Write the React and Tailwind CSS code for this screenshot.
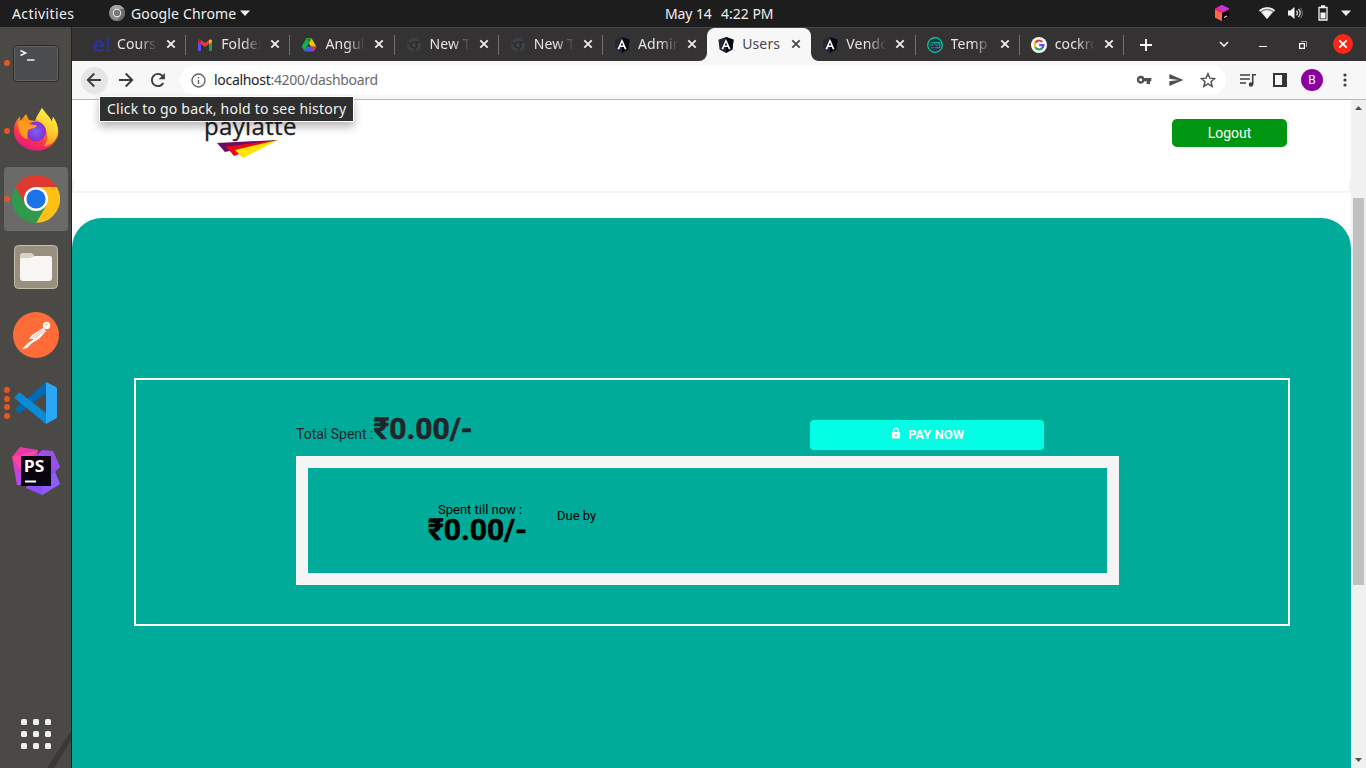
import React from "react";

const UI = "font-['Noto_Sans','Open_Sans',sans-serif]";

function ChromeMark({ size, className, center = "#1a73e8", ring = "#fff", red = "#dc3a2e", green = "#2f9a4c", yellow = "#fcc016" }) {
  return (
    <svg width={size} height={size} viewBox="0 0 48 48" className={className}>
      <path d="M24 12H44.8A24 24 0 0 0 3.2 12L13.6 30Z" fill={red} />
      <path d="M34.4 30L24 48A24 24 0 0 0 44.8 12H24Z" fill={yellow} />
      <path d="M13.6 30L3.2 12A24 24 0 0 0 24 48L34.4 30Z" fill={green} />
      <circle cx="24" cy="24" r="12" fill={ring} />
      <circle cx="24" cy="24" r="9.6" fill={center} />
    </svg>
  );
}

function Gmail() {
  return (
    <svg width="16" height="16" viewBox="0 0 16 16">
      <path d="M1 4h3v10H2a1 1 0 0 1-1-1z" fill="#5a50f0" />
      <path d="M12 4h3v9a1 1 0 0 1-1 1h-2z" fill="#1fa34a" />
      <path d="M1 4.2C1 2.500 3 2 4 3l4 3 4-3v4l-4 3-4-3L1 5z" fill="#f0383a" />
      <path d="M1 4.2C1 2.500 3 2 4 3v4L1 5z" fill="#c5221f" />
      <path d="M12 3c1-1 3-.5 3 1.200V5l-3 2z" fill="#fbbc04" />
    </svg>
  );
}

function Drive() {
  return (
    <svg width="16" height="16" viewBox="0 0 16 16">
      <path d="M5.300 1.500H10.700L8 6.200 3.400 14 .6 9.500z" fill="#12b04e" />
      <path d="M5.300 1.500H10.700L15.400 9.700H10L8 6.200z" fill="#ffc107" />
      <path d="M5.300 1.500H10.700L8 6.200z" fill="#0c8a3c" />
      <path d="M6 9.700H15.400L12.700 14.400H3.200z" fill="#5454ee" />
      <path d="M10.200 9.700H15.400L12.700 14.400z" fill="#e9352b" />
    </svg>
  );
}

function Angular() {
  return (
    <svg width="16" height="16" viewBox="0 0 16 16">
      <path d="M8 0l7.600 2.700-1.200 9.900L8 16l-6.400-3.400L.4 2.700z" fill="#232635" />
      <path d="M8 0l7.600 2.700-1.200 9.900L8 16z" fill="#05060f" />
      <path d="M8 2L3.400 12.300h1.900l.9-2.300h3.600l.9 2.300h1.900zM8 5.500l1.300 3H6.700z" fill="#fff" fillRule="evenodd" />
    </svg>
  );
}

function TempMail() {
  return (
    <svg width="16" height="16" viewBox="0 0 16 16" fill="none">
      <circle cx="8" cy="8" r="7.300" fill="#29344c" stroke="#00d69c" strokeWidth="1.200" />
      <path d="M6.500 5.500h6.300v5.200H8M7 6l3 2.600L12.500 6M4 5.500H6M3 8h3.400M4.700 10.700h2" stroke="#00c898" strokeWidth=".9" />
    </svg>
  );
}

function Google() {
  return (
    <svg width="16" height="16" viewBox="0 0 16 16" fill="none">
      <circle cx="8" cy="8" r="8" fill="#fff" />
      <g strokeWidth="2.200">
        <path d="M4.200 5.700A4.500 4.500 0 0 1 11.300 4.900" stroke="#ea3a30" />
        <path d="M4.200 5.700A4.500 4.500 0 0 0 4.200 10.300" stroke="#fbbc05" />
        <path d="M4.200 10.300A4.500 4.500 0 0 0 11 11.400" stroke="#20a84a" />
        <path d="M11 11.400A4.500 4.500 0 0 0 12.500 8.100H8.200" stroke="#5556f2" />
      </g>
    </svg>
  );
}

function Coursera() {
  return <span className="block text-[21px] leading-[14px] font-bold text-[#2b348b] font-['Open_Sans',sans-serif]">e!</span>;
}

const DimChrome = () => (
  <svg width="14" height="14" viewBox="0 0 48 48" className="mt-px ml-px">
    <circle cx="24" cy="24" r="24" fill="#3d4145" />
    <circle cx="24" cy="24" r="10" fill="#3d4145" stroke="#2c2b2d" strokeWidth="4" />
    <path d="M24 13H45M14 30L4 12M34 30L24 47" stroke="#2c2b2d" strokeWidth="4" />
  </svg>
);

const tabs = [
  { t: "Cours", I: Coursera, fade: true, sep: true },
  { t: "Folder", I: Gmail, fade: true, sep: true },
  { t: "Angul", I: Drive, fade: true, sep: true },
  { t: "New T", I: DimChrome, fade: true, sep: true },
  { t: "New T", I: DimChrome, fade: true, sep: true },
  { t: "Admin", I: Angular, fade: true },
  { t: "Users", I: Angular, active: true },
  { t: "Vendo", I: Angular, fade: true, sep: true },
  { t: "Temp", I: TempMail, fade: true, sep: true },
  { t: "cockro", I: Google, fade: true, sep: true },
];

function Cross({ color }) {
  return (
    <svg width="10" height="10" viewBox="0 0 10 10" className="shrink-0">
      <path d="M1.300 1.300l7.400 7.400M8.700 1.300L1.300 8.700" stroke={color} strokeWidth="1.800" />
    </svg>
  );
}

function Tab({ tab }) {
  const { t, I, active, fade, sep } = tab;
  return (
    <div className={"relative flex h-full w-[104.200px] shrink-0 items-center pl-[11px] " + (active ? "rounded-t-[8px] bg-[#f7f7f7]" : "")}>
      {active && (
        <>
          <svg width="8" height="8" className="absolute bottom-0 -left-[8px]"><path d="M8 0v8H0A8 8 0 0 0 8 0z" fill="#f7f7f7" /></svg>
          <svg width="8" height="8" className="absolute -right-[8px] bottom-0"><path d="M0 0v8h8A8 8 0 0 1 0 0z" fill="#f7f7f7" /></svg>
        </>
      )}
      <div className="h-4 w-4 shrink-0"><I /></div>
      <div className={"ml-2 w-[40px] overflow-hidden pb-[2px] text-[14px] leading-5 tracking-[0.15px] whitespace-nowrap " + (active ? "text-[#45484c] " : "text-[#e6e6e6] ") + (fade ? "[mask-image:linear-gradient(to_right,black_55%,transparent)]" : "")}>{t}</div>
      <div className="mb-px ml-[9px] flex"><Cross color={active ? "#45484c" : "#efefef"} /></div>
      {sep && <div className="absolute top-[7px] right-0 h-5 w-px bg-[#717073]" />}
    </div>
  );
}

function TopBar() {
  return (
    <div className="grid h-[27px] shrink-0 grid-cols-3 items-center bg-[#1d1d1d] pb-px text-[14px] text-[#f0f0f0]">
      <div className="flex items-center">
        <span className="ml-3 w-[97px] tracking-[0.4px]">Activities</span>
        <svg width="16" height="16" viewBox="0 0 16 16">
          <circle cx="8" cy="8" r="8" fill="#8b8b8b" />
          <path d="M8 4h7A8 8 0 0 1 8 16l4-6z" fill="#696969" />
          <path d="M1 4a8 8 0 0 1 14 0H8z" fill="#a5a5a5" />
          <circle cx="8" cy="8" r="4.200" fill="#f2f2f2" />
          <circle cx="8" cy="8" r="3.200" fill="#777" />
        </svg>
        <span className="ml-1.5 w-[104px] whitespace-nowrap tracking-[0.15px]">Google Chrome</span>
        <svg width="10" height="6" className="ml-[5px]"><path d="M0 .5h10L5 6z" fill="#eee" /></svg>
      </div>
      <div className="flex justify-center gap-[10px] pl-[73px] whitespace-nowrap">
        <span className="w-[46px] tracking-[-0.1px]">May 14</span>
        <span className="w-[53px]">4:22 PM</span>
      </div>
      <div className="flex items-center justify-end">
        <svg width="16" height="16" viewBox="0 0 16 16" className="mr-[29px]">
          <path d="M8 0l7 3.500v8L8 16l-7-3.500v-9z" fill="#ef2672" />
          <path d="M8 0l7 3.500L8 7.500 4 2z" fill="#c733e0" />
          <path d="M1 5l7 3v8l-7-3.500z" fill="#fc6b48" />
          <path d="M8 8l7-3.500v7L8 16z" fill="#080808" />
          <path d="M10 12.500l3-1.500" stroke="#fff" />
        </svg>
        <svg width="16" height="14" viewBox="0 0 16 14" className="mr-[12px]">
          <path d="M0 4.300A12 12 0 0 1 16 4.300L8 13z" fill="#888" />
          <path d="M0 4.300A12 12 0 0 1 16 4.300L15 5.400A10.600 10.600 0 0 0 1 5.400z" fill="#f3f3f3" />
          <path d="M2.500 6.200A8.800 8.800 0 0 1 13.500 6.200L8 13z" fill="#f3f3f3" />
        </svg>
        <svg width="16" height="14" viewBox="0 0 16 14" className="mr-[15px]">
          <path d="M1 4.500h2.500L7.500 1v12l-4-3.500H1z" fill="#f3f3f3" />
          <path d="M9.500 4.700q2 2.300 0 4.600M11.500 3q3.400 4 0 8" stroke="#ddd" fill="none" strokeWidth="1.200" />
          <path d="M13.400 1.700q4 5.300 0 10.600" stroke="#777" fill="none" />
        </svg>
        <svg width="10" height="16" viewBox="0 0 10 16" className="mr-[13px]">
          <path d="M1 2.500h8v12.500H1zM3 1h4" stroke="#f3f3f3" fill="none" strokeWidth="1.300" />
          <path d="M2.500 7.500h5v6h-5z" fill="#f3f3f3" />
        </svg>
        <svg width="10" height="6" className="mr-[15px]"><path d="M0 .5h10L5 6z" fill="#eee" /></svg>
      </div>
    </div>
  );
}

function Dots({ n }) {
  return (
    <div className="flex w-[14px] shrink-0 flex-col items-center gap-[2.800px]">
      {Array.from({ length: n }, (_, i) => <span key={i} className="h-[6px] w-[6px] rounded-full bg-[#e95420]" />)}
    </div>
  );
}

function DockItem({ dots = 0, selected, children }) {
  return (
    <div className="flex h-[68px] items-center">
      <div className="flex w-[72px] items-center">
        <div className={"ml-1 flex h-16 w-16 items-center rounded-[4px] " + (selected ? "bg-[#6a6a69]" : "")}>
          <div className="-ml-1 flex w-[8px]"><Dots n={dots} /></div>
          <div className="flex flex-1 items-center justify-center pr-1">{children}</div>
        </div>
      </div>
    </div>
  );
}

function Dock() {
  return (
    <div className="relative flex w-[72px] shrink-0 flex-col border-r border-[#222] bg-[#4a4945] pt-[2px]">
      <DockItem dots={1}>
        <svg width="48" height="48" viewBox="0 0 48 48">
          <rect x="1.500" y="6.500" width="45" height="36" rx="4" fill="#4b4c4e" stroke="#2a2a2a" />
          <rect x="2.500" y="7.500" width="43" height="34" rx="3" fill="none" stroke="#646464" />
          <path d="M8.500 11.500l5 2.500-5 2.500M15 21h7.500" stroke="#eee" strokeWidth="1.700" fill="none" />
        </svg>
      </DockItem>
      <DockItem dots={1}>
        <svg width="48" height="48" viewBox="0 0 48 48">
          <defs>
            <linearGradient id="fx1" x1=".8" y1="0" x2=".3" y2="1"><stop offset="0" stopColor="#fff44f" /><stop offset=".4" stopColor="#ff980e" /><stop offset=".7" stopColor="#ff3647" /><stop offset="1" stopColor="#e31587" /></linearGradient>
            <linearGradient id="fx3" x1=".5" y1="0" x2=".2" y2="1"><stop offset="0" stopColor="#fff44f" /><stop offset=".6" stopColor="#ffc52b" /><stop offset="1" stopColor="#ff8020" /></linearGradient>
            <radialGradient id="fx2"><stop offset="0" stopColor="#7364f4" /><stop offset="1" stopColor="#8a2dce" /></radialGradient>
          </defs>
          <path d="M2 26C1.500 18 4 13 8 9.500L8.500 14 14 7 17 13 23 14 25 9 30 1 37 10 40 15 41 10C46 16 47 24 46 29A22.500 20 0 0 1 2 26z" fill="url(#fx1)" />
          <path d="M24 12L30 1C32 7 38 9 40 15L41 10C46 18 47 25 44 31 41 37 36 39 32 39 38 32 36 18 24 12z" fill="url(#fx3)" />
          <circle cx="24" cy="24.500" r="10" fill="url(#fx2)" />
          <path d="M6 15C10 12 14 13 17 17L25 18.500C24 22 17 21 16 24 15 27 16 29 15 32 9 31 6 24 6 15z" fill="#ff9a1a" />
        </svg>
      </DockItem>
      <DockItem dots={1} selected><ChromeMark size={48} /></DockItem>
      <DockItem>
        <svg width="48" height="48" viewBox="0 0 48 48">
          <rect x="2.500" y="2.500" width="43" height="43" rx="4" fill="#988f7e" stroke="#c4bcab" />
          <path d="M8 13a3 3 0 0 1 3-3h8q2 0 4 4h14v5H8z" fill="#d8d2c7" />
          <path d="M8 17q0-2 2-2h8l5-2h15q2 0 2 2v20q0 3-3 3H11q-3 0-3-3z" fill="#f7f6f5" />
        </svg>
      </DockItem>
      <DockItem>
        <svg width="48" height="48" viewBox="0 0 48 48">
          <circle cx="24" cy="24" r="23" fill="#ff6c37" />
          <circle cx="34.500" cy="14.500" r="3.700" fill="#fff" />
          <path d="M31 17L20 24 17 28 22 28 16 32 10 38 15 37 20 32 27 28 34 20z" fill="#fff" />
          <path d="M20 27l10-8M23 27l9-7" stroke="#ff6c37" strokeWidth=".6" />
          <path d="M33.500 14.500l2-1.500" stroke="#ff6c37" />
        </svg>
      </DockItem>
      <DockItem dots={4}>
        <svg width="48" height="48" viewBox="0 0 48 48">
          <path d="M3 30l3 3.500q1 .7 2 0L34 14V3z" fill="#006bb3" />
          <path d="M3 17.500L6.500 14q1-.7 2 0L34 34v11L3 19.500q-1-1 0-2z" fill="#0b8bd6" />
          <path d="M34 3l10 5q1 .5 1 1.500V38q0 1-1 1.500L34 45z" fill="#2aa7f5" />
        </svg>
      </DockItem>
      <DockItem>
        <svg width="50" height="50" viewBox="0 0 50 50">
          <defs>
            <linearGradient id="ps1" x1="0" y1="0" x2=".4" y2="1"><stop stopColor="#ff318c" /><stop offset="1" stopColor="#a84dfa" /></linearGradient>
            <linearGradient id="ps2" x1="0" y1="0" x2="1" y2="1"><stop stopColor="#b748ec" /><stop offset="1" stopColor="#6c57ff" /></linearGradient>
          </defs>
          <path d="M1 11L9 1 27 4 22 40 6 39z" fill="url(#ps1)" />
          <path d="M27 8L31 4 42 5 49 21 44 26 49 38 31 49 15 42z" fill="url(#ps2)" />
          <path d="M1 11L27 4 10 24z" fill="#ff45a1" />
          <path d="M31 49L49 38 44 26 31 35z" fill="#8f5afb" />
          <path d="M42 5L40 24 49 21z" fill="#9a4fe6" />
          <path d="M10 10h30v30H10z" fill="#080510" />
          <path d="M14 35.500h11" stroke="#fff" strokeWidth="2" />
          <text x="12.800" y="25.500" fill="#fff" fontSize="16" fontWeight="700" fontFamily="Open Sans" textLength="20.500" lengthAdjust="spacingAndGlyphs">PS</text>
        </svg>
      </DockItem>
      <svg width="24" height="46" className="absolute right-0 bottom-0"><path d="M0 46L24 9v9L7 46z" fill="#3a3936" /></svg>
      <div className="mt-auto mb-[19px] grid grid-cols-3 gap-[6px] self-center">
        {Array.from({ length: 9 }, (_, i) => <span key={i} className="h-[6px] w-[6px] rounded-[1.500px] bg-[#eeeeec]" />)}
      </div>
    </div>
  );
}

function Toolbar() {
  return (
    <div className="relative flex h-[39px] shrink-0 items-center border-b border-[#b9b9b9] bg-[#f7f7f7] pl-[9px]">
      <div className="flex h-[27px] w-[27px] items-center justify-center rounded-full bg-[#e6e6e6] pr-[2px]">
        <svg width="16" height="16" viewBox="0 0 16 16" fill="none" stroke="#3c3c3e" strokeWidth="1.900"><path d="M15 8H2M8.300 1.500L1.800 8l6.500 6.500" /></svg>
      </div>
      <svg width="16" height="16" viewBox="0 0 16 16" fill="none" stroke="#3c3c3e" strokeWidth="1.900" className="ml-[10px]"><path d="M1 8h13M7.700 1.500L14.200 8l-6.500 6.500" /></svg>
      <svg width="16" height="16" viewBox="0 0 16 16" fill="none" stroke="#3c3c3e" strokeWidth="1.900" className="ml-4"><path d="M13.300 11A6.100 6.100 0 1 1 12.300 3.700L14 5.500" /><path d="M14.900 1v6.200H8.700z" fill="#3c3c3e" stroke="none" /></svg>
      <div className="ml-[14px] flex h-[30px] w-[1046px] items-center rounded-full bg-white pl-[11px]">
        <svg width="15" height="15" viewBox="0 0 15 15" fill="none" stroke="#5f6368" strokeWidth="1.400"><circle cx="7.500" cy="7.500" r="6.500" /><path d="M7.500 6.700V11M7.500 4v1.500" /></svg>
        <span className="ml-[8px] pb-[2px] text-[14px] tracking-[-0.3px] text-[#6a6a6e]"><span className="text-[#202124]">localhost</span>:4200/dashboard</span>
        <div className="mr-[10px] ml-auto flex items-center gap-[16px]">
          <svg width="16" height="16" viewBox="0 0 24 24" fill="#505053"><path d="M12.650 9A6 6 0 1 0 12.650 14H16v4h5v-4h2V9H12.650zM7 14a2 2 0 1 1 0-4.500 2 2 0 0 1 0 4.500z" /></svg>
          <svg width="16" height="16" viewBox="0 0 24 24" fill="#505053"><path d="M2 21L23 12 2 3v7l14 2-14 2z" /></svg>
          <svg width="16" height="16" viewBox="0 0 24 24" fill="none" stroke="#505053" strokeWidth="2.200"><path d="M12 2.500l2.800 6.700 7.200.6-5.500 4.700 1.700 7-6.200-3.800-6.200 3.800 1.700-7L2 9.800l7.200-.6z" /></svg>
        </div>
      </div>
      <svg width="16" height="15" viewBox="0 0 16 15" className="ml-[14px]" fill="none" stroke="#3f3f42" strokeWidth="1.600"><path d="M0 2h10M0 6h10M0 10h6M12.700 11.500V1.800H16" /><circle cx="11" cy="11.500" r="2.200" fill="#3f3f42" stroke="none" /></svg>
      <svg width="14" height="14" viewBox="0 0 14 14" className="ml-[17px]"><path d="M1 1h12v12H1z" fill="none" stroke="#333436" strokeWidth="2" /><path d="M9 0h5v14H9z" fill="#333436" /></svg>
      <div className="ml-[14px] flex h-[22px] w-[22px] items-center justify-center rounded-full bg-[#8c00a0] font-['Roboto',sans-serif] text-[12px] text-white">B</div>
      <svg width="4" height="14" viewBox="0 0 4 14" className="ml-5" fill="#3f3f42"><circle cx="2" cy="2" r="1.600" /><circle cx="2" cy="7" r="1.600" /><circle cx="2" cy="12" r="1.600" /></svg>
      <div className="absolute top-[35px] left-[27px] z-10 flex h-[26px] w-[255px] items-center border border-white bg-[#2f2f2f] pb-[2px] pl-[7px] text-[14px] whitespace-nowrap tracking-[0.21px] text-[#f2f2f2] shadow-[0_5px_9px_rgba(0,0,0,0.28)]">Click to go back, hold to see history</div>
    </div>
  );
}

const AMOUNT = "font-bold text-[30px] [-webkit-text-stroke:0.6px_currentColor]";

function Page() {
  return (
    <div className="flex min-h-0 flex-1">
      <div className="flex w-[1279px] flex-col overflow-hidden bg-white font-['Roboto',sans-serif]">
        <div className="flex h-[80px] shrink-0 items-start justify-between pr-[64px] pl-[132px]">
          <div className="flex flex-col pt-[7px]">
            <span className="h-[31px] w-[94px] font-['Open_Sans',sans-serif] text-[24px] leading-[38px] tracking-[0.35px] text-[#222] [-webkit-text-stroke:0.3px_currentColor]">paylatte</span>
            <svg width="64" height="21" viewBox="0 0 64 21" className="ml-[12px]">
              <path d="M1 5L62 2 9 14z" fill="#6d0a62" />
              <path d="M10 8.500L62 2 18 18z" fill="#ee0814" />
              <path d="M19 12L62 2 27 20z" fill="#ffe500" />
            </svg>
          </div>
          <button className="mt-[19px] h-[28px] w-[115px] rounded-[5px] bg-[#009612] text-[14px] text-white">Logout</button>
        </div>
        <div className="h-[13px] shrink-0 border-x-2 border-b-2 border-[#f4f4f4]" />
        <div className="mt-[25px] flex-1 rounded-t-[30px] bg-[#00ab99] pt-[160px] pr-[61px] pl-[62px]">
          <div className="h-[248px] border-2 border-white pt-[30px] pl-[160px]">
            <div className="flex h-[46px] w-[823px]">
              <div className="w-[514px] text-[14px] leading-[38px] text-[#212529]">Total Spent :<b className={AMOUNT}>₹0.00/-</b></div>
              <button className="mt-[10px] flex h-[30px] w-[234px] items-center justify-center rounded-[4px] bg-[#00ffe4] text-[13px] font-bold text-white">
                <svg width="10" height="13" viewBox="0 0 10 13" className="mr-[7px] mb-[3px]"><path d="M1 5h8v6.500H1z" fill="#fff" /><path d="M2.700 5V3.500a2.300 2.300 0 0 1 4.600 0V5" stroke="#fff" strokeWidth="1.100" fill="none" /><path d="M4 7.500h2v1.500H4z" fill="#00ffe4" /></svg>
                <span className="-mr-px">PAY NOW</span>
              </button>
            </div>
            <div className="flex h-[129px] w-[823px] border-[12px] border-[#f5f5f5] pt-[33px] pl-[120px] text-[13px] text-black">
              <div className="w-[129px]">
                <div className="pl-[10px] leading-[17px]">Spent till now :</div>
                <b className={"block leading-[24px] " + AMOUNT}>₹0.00/-</b>
              </div>
              <span className="mt-[6px] leading-[17px]">Due by</span>
            </div>
          </div>
        </div>
      </div>
      <div className="flex w-[15px] shrink-0 flex-col items-center bg-[#f1f1f1]">
        <svg width="7" height="4" className="mt-[6px]"><path d="M0 4h7L3.500 0z" fill="#505050" /></svg>
        <div className="mt-[88px] h-[387px] w-[11px] bg-[#c1c1c1]" />
        <svg width="7" height="4" className="mt-auto mb-[6px]"><path d="M0 0h7L3.500 4z" fill="#505050" /></svg>
      </div>
    </div>
  );
}

export default function App() {
  return (
    <div className={"flex h-[768px] w-[1366px] flex-col overflow-hidden " + UI}>
      <TopBar />
      <div className="flex min-h-0 flex-1">
        <Dock />
        <div className="flex min-w-0 flex-1 flex-col">
          <div className="flex h-[34px] shrink-0 items-center border-t border-[#464546] bg-[#343233] pl-[10px]">
            {tabs.map((tab, i) => <Tab key={i} tab={tab} />)}
            <svg width="12" height="12" viewBox="0 0 12 12" className="ml-4"><path d="M6 0v12M0 6h12" stroke="#fff" strokeWidth="1.800" /></svg>
            <svg width="10" height="7" viewBox="0 0 10 7" className="ml-[67px]" fill="none"><path d="M1 1l4 4 4-4" stroke="#eee" strokeWidth="1.700" /></svg>
            <div className="mt-1 ml-[30px] h-px w-2 bg-white" />
            <svg width="8" height="8" viewBox="0 0 8 8" className="ml-8" fill="none"><path d="M.6 2.600h4.800v4.800H.6z" stroke="#fff" strokeWidth="1.200" /><path d="M2 .5h5.500V6" stroke="#aaa" /></svg>
            <div className="mb-px ml-[26px] flex h-5 w-5 items-center justify-center rounded-full bg-[#f82717]"><Cross color="#fff" /></div>
          </div>
          <Toolbar />
          <Page />
        </div>
      </div>
    </div>
  );
}
